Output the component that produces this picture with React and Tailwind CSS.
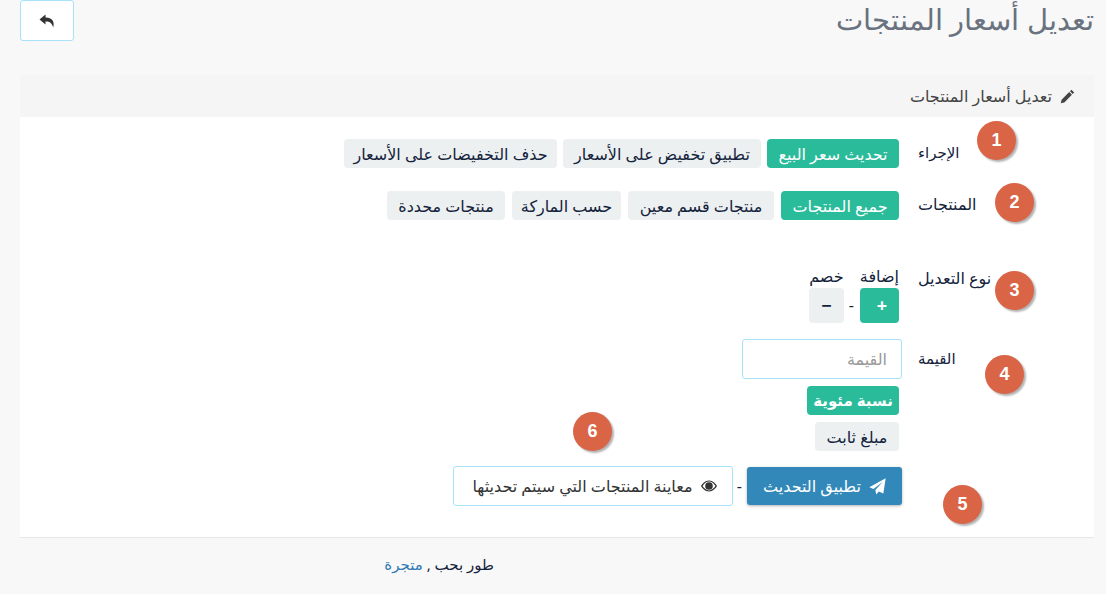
import React from "react";

const F = { fontFamily: '"Noto Sans", "DejaVu Sans", "Liberation Sans", sans-serif' };

function Badge({ n, cls }) {
  return (
    <div className={`absolute w-[39px] h-[39px] rounded-full bg-[#d96446] text-white font-bold text-[18px] flex items-center justify-center shadow-[2px_2px_2px_rgba(0,0,0,0.3)] ${cls}`} style={{ fontFamily: '"Liberation Sans", sans-serif' }}>
      {n}
    </div>
  );
}

function Pill({ on, bold, w, children }) {
  return (
    <span className={`h-[29px] rounded-[4px] flex items-center justify-center whitespace-nowrap ${w} ${bold ? "font-bold text-[15px]" : "text-[16px]"} ${on ? "bg-[#2abb9b] text-white" : "bg-[#ecf0f1] text-[#14233c]"}`}>
      {children}
    </span>
  );
}

export default function App() {
  return (
    <div dir="rtl" className="relative w-[1106px] h-[594px] overflow-hidden bg-[#f8f8f8] text-[#14233c]" style={F}>
      <div className="flex items-start justify-between pr-[12px] pl-[20px] h-[75px]">
        <h1 className="text-[29px] font-light leading-[38px] text-[#69727e]">تعديل أسعار المنتجات</h1>
        <button className="w-[54px] h-[41px] bg-white border border-[#a6e3fb] rounded-[3px] flex items-center justify-center text-[#333]">
          <svg width="16" height="14" viewBox="0 0 16 14" fill="currentColor"><path d="M6.5 0.5 L0.5 5.5 L6.5 10.5 L6.5 7.5 C10 7.3 12.6 8.2 14.2 13.5 C15.6 8.5 14.4 3.6 6.5 3.4 Z" /></svg>
        </button>
      </div>

      <div className="mr-[12px] ml-[20px] h-[463px] bg-white border-b border-[#e7e7e7]">
        <div className="h-[42px] bg-[#f5f5f5] pr-[19px] flex items-center gap-[8px] text-[16px] text-[#444]">
          <svg width="15" height="15" viewBox="0 0 16 16" fill="#444"><path d="M12.2 0.9 L15.1 3.8 L13.5 5.4 L10.6 2.5 Z M9.8 3.3 L12.7 6.2 L4.6 14.3 L0.8 15.2 L1.7 11.4 Z" /></svg>
          <span>تعديل أسعار المنتجات</span>
        </div>

        <div className="pr-[96px] pt-[22px]">
          <div className="flex items-start gap-[19px] h-[52px]">
            <div className="w-[80px] text-left text-[15px] leading-[26px]">الإجراء</div>
            <div className="flex gap-[6px]">
              <Pill on w="w-[132px]">تحديث سعر البيع</Pill>
              <Pill w="w-[198px]">تطبيق تخفيض على الأسعار</Pill>
              <Pill w="w-[213px]">حذف التخفيضات على الأسعار</Pill>
            </div>
          </div>
          <div className="flex items-start gap-[19px] h-[58px]">
            <div className="w-[80px] text-left text-[16px] leading-[26px]">المنتجات</div>
            <div className="flex gap-[7px]">
              <Pill on w="w-[118px]">جميع المنتجات</Pill>
              <Pill w="w-[146px]">منتجات قسم معين</Pill>
              <Pill w="w-[109px]">حسب الماركة</Pill>
              <Pill w="w-[118px]">منتجات محددة</Pill>
            </div>
          </div>
          <div className="flex items-start gap-[19px] h-[90px] pt-[16px]">
            <div className="w-[80px] text-left text-[16px] leading-[26px] whitespace-nowrap">نوع التعديل</div>
            <div className="flex items-end gap-[6px] text-[16px]">
              <div className="flex flex-col items-stretch">
                <span className="leading-[23px] whitespace-nowrap">إضافة</span>
                <span className="w-[39px] h-[35px] rounded-[4px] bg-[#2abb9b] text-white font-bold text-[18px] flex items-center justify-center pl-[5px]">+</span>
              </div>
              <span className="leading-[35px] w-[4px]">-</span>
              <div className="flex flex-col items-stretch">
                <span className="leading-[23px] text-center">خصم</span>
                <span className="w-[35px] h-[35px] rounded-[4px] bg-[#ecf0f1] font-bold text-[18px] flex items-center justify-center">−</span>
              </div>
            </div>
          </div>
          <div className="flex items-start gap-[16px]">
            <div className="w-[80px] text-left text-[15px] leading-[38px]">القيمة</div>
            <div className="flex flex-col items-start">
              <input placeholder="القيمة" className="w-[160px] h-[40px] px-[14px] bg-white border border-[#a6e3fb] rounded-[3px] text-[16px] placeholder:text-[#999] outline-none" dir="rtl" />
              <div className="mt-[7px] mr-[3px] flex flex-col items-start gap-[7px]">
                <Pill on bold w="w-[92px]">نسبة مئوية</Pill>
                <Pill w="w-[84px]">مبلغ ثابت</Pill>
              </div>
            </div>
          </div>
          <div className="flex items-center mr-[96px] mt-[15px] gap-[5px] text-[16px]">
            <button className="w-[155px] h-[38px] bg-[#3289b9] text-white rounded-[3px] flex items-center justify-center gap-[8px] shadow-[0_1px_3px_rgba(0,0,0,0.3)]">
              <svg width="17" height="17" viewBox="0 0 16 16" fill="white"><path d="M15.7 0.2 L13.5 14.5 L9.2 12.6 L6.8 15.6 L6 11.3 L13 3.5 L4.2 10.3 L0.3 8.6 Z" /></svg>
              <span>تطبيق التحديث</span>
            </button>
            <span className="w-[4px]">-</span>
            <button className="w-[280px] h-[40px] bg-white border border-[#a6e3fb] rounded-[3px] flex items-center justify-center gap-[8px] pl-[3px] text-[#333]">
              <svg width="16" height="12" viewBox="0 0 16 12"><path fillRule="evenodd" fill="#333" d="M8 0.5 C12 0.5 15 4 16 6 C15 8 12 11.5 8 11.5 C4 11.5 1 8 0 6 C1 4 4 0.5 8 0.5 Z M8 1.6 C5.6 1.6 3 3.6 1.6 6 C3 8.4 5.6 10.4 8 10.4 C10.4 10.4 13 8.4 14.4 6 C13 3.6 10.4 1.6 8 1.6 Z M8 2.2 A3.8 3.8 0 1 0 8 9.8 A3.8 3.8 0 1 0 8 2.2 Z" /></svg>
              <span>معاينة المنتجات التي سيتم تحديثها</span>
            </button>
          </div>
        </div>
      </div>

      <div className="mr-[612px] pt-[15px] text-[15px] leading-[22px] whitespace-nowrap">
        طور بحب , <a className="text-[#337ab7]">متجرة</a>
      </div>

      <Badge n="1" cls="left-[977px] top-[121px]" />
      <Badge n="2" cls="left-[995px] top-[183px]" />
      <Badge n="3" cls="left-[995px] top-[271px]" />
      <Badge n="4" cls="left-[985px] top-[355px]" />
      <Badge n="5" cls="left-[943px] top-[485px]" />
      <Badge n="6" cls="left-[573px] top-[412px]" />
    </div>
  );
}
